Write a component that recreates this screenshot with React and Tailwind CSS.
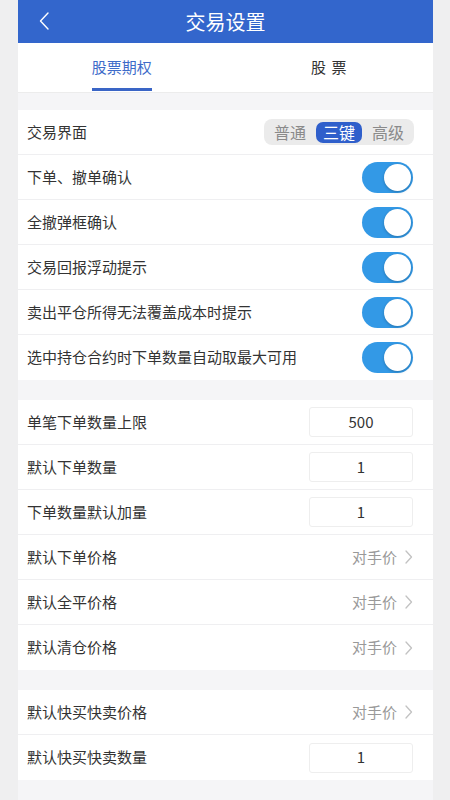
import React, { useState } from "react"

const font = { fontFamily: '"Noto Sans CJK SC", "Noto Sans", sans-serif' }

function Toggle({ on, onClick }) {
  return (
    <button
      onClick={onClick}
      className={`w-[51px] h-[31px] rounded-full p-[2px] flex ${on ? "bg-[#3399e6] justify-end" : "bg-[#e5e5ea] justify-start"}`}
    >
      <span className="w-[27px] h-[27px] rounded-full bg-white shadow-[0_1px_3px_rgba(0,0,0,0.25)]" />
    </button>
  )
}

function Chevron({ className = "", color = "#c2c2c2", w = 8, h = 14, sw = 1.3 }) {
  return (
    <svg width={w} height={h} viewBox={`0 0 ${w} ${h}`} className={className} fill="none">
      <path d={`M1 1 L${w - 1.5} ${h / 2} L1 ${h - 1}`} stroke={color} strokeWidth={sw} strokeLinecap="round" strokeLinejoin="round" />
    </svg>
  )
}

function Row({ label, last, children }) {
  return (
    <div className={`h-[45px] flex items-center justify-between pl-[9px] pr-[20px] bg-white ${last ? "" : "border-b border-[#efeff1]"}`}>
      <span className="text-[15px] text-[#333]">{label}</span>
      {children}
    </div>
  )
}

function NumBox({ value }) {
  return (
    <div className="w-[104px] h-[30px] border border-[#eeeeee] rounded-[3px] flex items-center justify-center text-[15px] text-[#333]">
      {value}
    </div>
  )
}

function PickValue({ value }) {
  return (
    <div className="flex items-center gap-[8px] text-[15px] text-[#999]">
      <span>{value}</span>
      <Chevron />
    </div>
  )
}

export default function App() {
  const [tab, setTab] = useState(0)
  const [mode, setMode] = useState(1)
  const [toggles, setToggles] = useState([true, true, true, true, true])

  const toggleRows = [
    "下单、撤单确认",
    "全撤弹框确认",
    "交易回报浮动提示",
    "卖出平仓所得无法覆盖成本时提示",
    "选中持仓合约时下单数量自动取最大可用",
  ]

  return (
    <div className="min-h-[800px] bg-[#efeff0]" style={font}>
      <div className="ml-[18px] w-[415px] min-h-[800px] bg-[#f5f5f7]">
        {/* Header */}
        <div className="h-[43px] bg-[#3366cc] flex items-center relative">
          <button className="absolute left-[21px] top-[12px]">
            <Chevron color="#ffffff" w={10} h={18} sw={1.4} className="rotate-180" />
          </button>
          <h1 className="flex-1 text-center text-white text-[20px]">交易设置</h1>
        </div>

        {/* Tabs */}
        <div className="h-[50px] bg-white flex border-b border-[#ececec]">
          {["股票期权", "股 票"].map((t, i) => (
            <button key={t} onClick={() => setTab(i)} className="flex-1 flex justify-center">
              <span className={`relative h-full flex items-center text-[15px] ${i === 1 ? "tracking-[1px]" : ""} ${tab === i ? "text-[#3d6bc9]" : "text-[#333]"}`}>
                {t}
                {tab === i && <span className="absolute left-0 right-0 bottom-[1px] h-[3px] bg-[#3a65c6]" />}
              </span>
            </button>
          ))}
        </div>

        <div className="h-[17px]" />

        {/* Section 1 */}
        <div>
          <Row label="交易界面">
            <div className="w-[150px] h-[26px] rounded-[8px] bg-[#ebebeb] flex items-center justify-between px-[3px] text-[16px] -mr-[1px]">
              {["普通", "三键", "高级"].map((m, i) => (
                <button
                  key={m}
                  onClick={() => setMode(i)}
                  className={`h-[21px] w-[46px] rounded-[7px] flex items-center justify-center leading-none ${mode === i ? "bg-[#2f5fcb] text-white" : "text-[#8a8a8a]"}`}
                >
                  {m}
                </button>
              ))}
            </div>
          </Row>
          {toggleRows.map((label, i) => (
            <Row key={label} label={label} last={i === toggleRows.length - 1}>
              <Toggle on={toggles[i]} onClick={() => setToggles(toggles.map((v, j) => (j === i ? !v : v)))} />
            </Row>
          ))}
        </div>

        <div className="h-[20px]" />

        {/* Section 2 */}
        <div>
          <Row label="单笔下单数量上限"><NumBox value="500" /></Row>
          <Row label="默认下单数量"><NumBox value="1" /></Row>
          <Row label="下单数量默认加量"><NumBox value="1" /></Row>
          <Row label="默认下单价格"><PickValue value="对手价" /></Row>
          <Row label="默认全平价格"><PickValue value="对手价" /></Row>
          <Row label="默认清仓价格" last><PickValue value="对手价" /></Row>
        </div>

        <div className="h-[20px]" />

        {/* Section 3 */}
        <div>
          <Row label="默认快买快卖价格"><PickValue value="对手价" /></Row>
          <Row label="默认快买快卖数量" last><NumBox value="1" /></Row>
        </div>
      </div>
    </div>
  )
}
